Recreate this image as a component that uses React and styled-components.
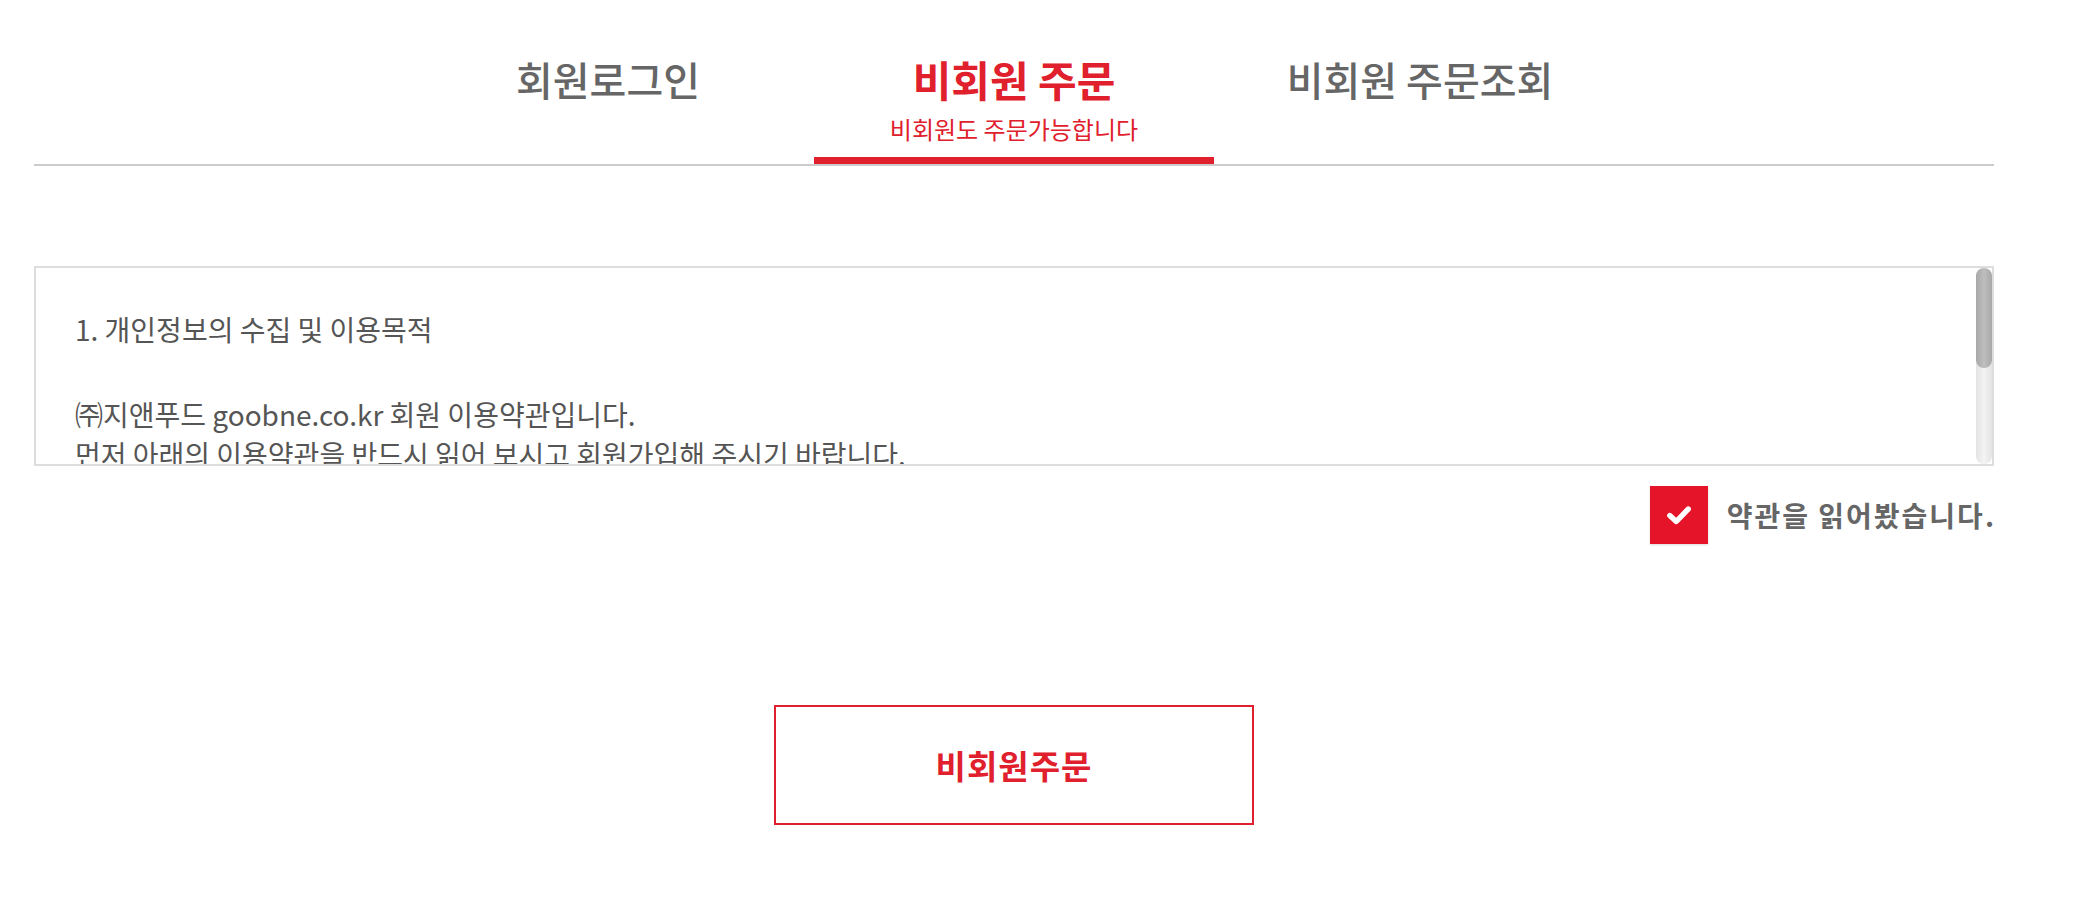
import React, { useState } from "react";
import styled, { createGlobalStyle } from "styled-components";

const GlobalStyle = createGlobalStyle`
  html, body { margin: 0; padding: 0; background: #fff; }
  body { font-family: "Noto Sans CJK KR", "Noto Sans", sans-serif; }
  * { box-sizing: border-box; }
`;

const RED = "#e0202c";

const Page = styled.div`
  width: 1960px;
  margin-left: 34px;
  padding-bottom: 60px;
`;

const TabBar = styled.nav`
  display: flex;
  justify-content: center;
  gap: 6px;
  padding-top: 55px;
  border-bottom: 2px solid #cccccc;
`;

const Tab = styled.div`
  width: 400px;
  display: flex;
  flex-direction: column;
  align-items: center;
  padding-bottom: 12px;
  border-bottom: 7px solid ${(p) => (p.$active ? RED : "transparent")};
  cursor: pointer;
`;

const TabTitle = styled.div`
  font-size: ${(p) => (p.$active ? 42 : 40)}px;
  line-height: 48px;
  font-weight: ${(p) => (p.$active ? 700 : 500)};
  color: ${(p) => (p.$active ? RED : "#666666")};
  white-space: nowrap;
`;

const TabSub = styled.div`
  margin-top: 10px;
  font-size: 24px;
  line-height: 32px;
  color: ${RED};
  white-space: nowrap;
`;

const TermsBox = styled.div`
  margin-top: 100px;
  height: 200px;
  border: 2px solid #dddddd;
  display: flex;
`;

const TermsContent = styled.div`
  flex: 1;
  overflow: hidden;
  padding: 41px 40px 0 39px;
  font-size: 28px;
  line-height: 40px;
  color: #555555;
`;

const TermsLine = styled.p`
  margin: 0 0 ${(p) => (p.$gap ? 45 : 0)}px;
  white-space: nowrap;
`;

const ScrollTrack = styled.div`
  width: 16px;
  flex: none;
  border-radius: 8px;
  background: linear-gradient(to right, #e3e3e3, #f3f3f3 50%, #e3e3e3);
  display: flex;
  flex-direction: column;
`;

const ScrollThumb = styled.div`
  height: 100px;
  border-radius: 8px;
  background: linear-gradient(to right, #a8a8a8, #bebebe 50%, #a8a8a8);
`;

const AgreeRow = styled.label`
  margin-top: 20px;
  display: flex;
  justify-content: flex-end;
  align-items: center;
  gap: 19px;
  cursor: pointer;
`;

const CheckBox = styled.span`
  width: 58px;
  height: 58px;
  display: flex;
  align-items: center;
  justify-content: center;
  background: ${(p) => (p.$checked ? "#e51428" : "#ffffff")};
  border: ${(p) => (p.$checked ? "none" : "2px solid #cccccc")};
  box-shadow: 0 1px 2px rgba(0, 0, 0, 0.15);
`;

const AgreeText = styled.span`
  font-size: 28px;
  font-weight: 700;
  color: #666666;
  letter-spacing: 2px;
  margin-right: -2px;
`;

const ButtonRow = styled.div`
  margin-top: 161px;
  display: flex;
  justify-content: center;
`;

const OrderButton = styled.button`
  width: 480px;
  height: 120px;
  border: 2px solid ${RED};
  background: #ffffff;
  color: ${RED};
  font-family: "Noto Sans CJK KR", sans-serif;
  font-size: 33px;
  font-weight: 700;
  letter-spacing: 1px;
  cursor: pointer;
`;

const terms = [
  { text: "1. 개인정보의 수집 및 이용목적", gap: true },
  { text: "㈜지앤푸드 goobne.co.kr 회원 이용약관입니다." },
  { text: "먼저 아래의 이용약관을 반드시 읽어 보시고 회원가입해 주시기 바랍니다." },
  { text: "제1조 (목적)" },
];

export default function App() {
  const [checked, setChecked] = useState(true);
  return (
    <>
      <GlobalStyle />
      <Page>
        <TabBar>
          <Tab>
            <TabTitle>회원로그인</TabTitle>
          </Tab>
          <Tab $active>
            <TabTitle $active>비회원 주문</TabTitle>
            <TabSub>비회원도 주문가능합니다</TabSub>
          </Tab>
          <Tab>
            <TabTitle>비회원 주문조회</TabTitle>
          </Tab>
        </TabBar>

        <TermsBox>
          <TermsContent>
            {terms.map((t, i) => (
              <TermsLine key={i} $gap={t.gap}>
                {t.text}
              </TermsLine>
            ))}
          </TermsContent>
          <ScrollTrack>
            <ScrollThumb />
          </ScrollTrack>
        </TermsBox>

        <AgreeRow onClick={() => setChecked((c) => !c)}>
          <CheckBox $checked={checked}>
            {checked && (
              <svg width="26" height="22" viewBox="0 0 24 20">
                <path
                  d="M3.5 10.5 L9.5 16 L20.5 4.5"
                  fill="none"
                  stroke="#ffffff"
                  strokeWidth="5"
                  strokeLinecap="round"
                  strokeLinejoin="round"
                />
              </svg>
            )}
          </CheckBox>
          <AgreeText>약관을 읽어봤습니다.</AgreeText>
        </AgreeRow>

        <ButtonRow>
          <OrderButton>비회원주문</OrderButton>
        </ButtonRow>
      </Page>
    </>
  );
}
